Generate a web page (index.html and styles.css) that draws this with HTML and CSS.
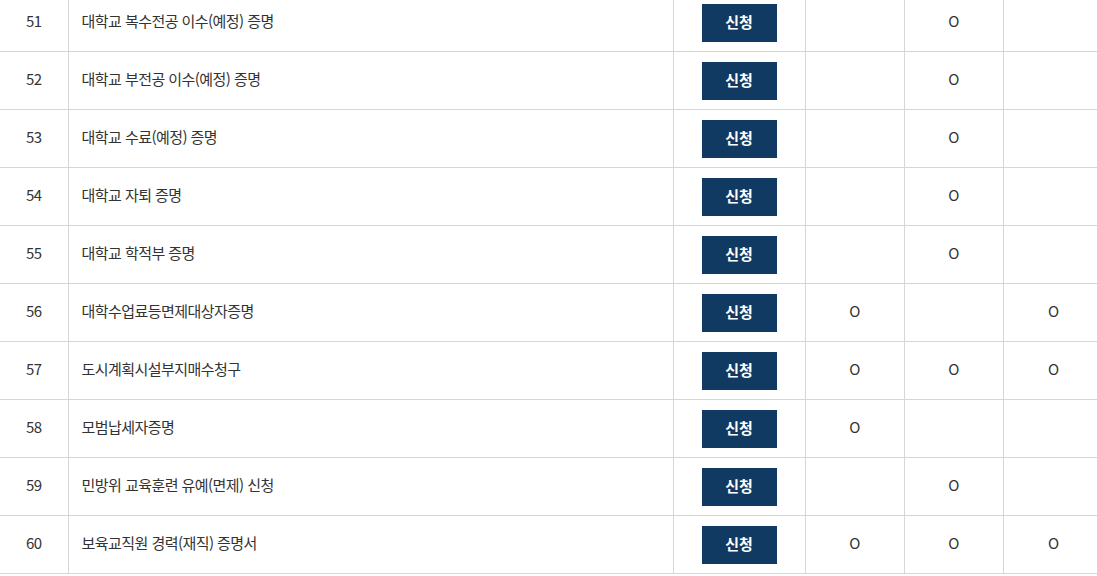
FILE: index.html
```html
<!DOCTYPE html>
<html lang="ko">
<head>
<meta charset="utf-8">
<link rel="stylesheet" href="styles.css">
</head>
<body>
<table class="doc-table">
  <colgroup>
    <col class="c-no"><col class="c-name"><col class="c-btn"><col class="c-o"><col class="c-o"><col class="c-last">
  </colgroup>
  <tbody>
    <tr><td class="no">51</td><td class="name">대학교 복수전공 이수(예정) 증명</td><td class="act"><button class="apply">신청</button></td><td class="mark"></td><td class="mark">O</td><td class="mark last"></td></tr>
    <tr><td class="no">52</td><td class="name">대학교 부전공 이수(예정) 증명</td><td class="act"><button class="apply">신청</button></td><td class="mark"></td><td class="mark">O</td><td class="mark last"></td></tr>
    <tr><td class="no">53</td><td class="name">대학교 수료(예정) 증명</td><td class="act"><button class="apply">신청</button></td><td class="mark"></td><td class="mark">O</td><td class="mark last"></td></tr>
    <tr><td class="no">54</td><td class="name">대학교 자퇴 증명</td><td class="act"><button class="apply">신청</button></td><td class="mark"></td><td class="mark">O</td><td class="mark last"></td></tr>
    <tr><td class="no">55</td><td class="name">대학교 학적부 증명</td><td class="act"><button class="apply">신청</button></td><td class="mark"></td><td class="mark">O</td><td class="mark last"></td></tr>
    <tr><td class="no">56</td><td class="name">대학수업료등면제대상자증명</td><td class="act"><button class="apply">신청</button></td><td class="mark">O</td><td class="mark"></td><td class="mark last">O</td></tr>
    <tr><td class="no">57</td><td class="name">도시계획시설부지매수청구</td><td class="act"><button class="apply">신청</button></td><td class="mark">O</td><td class="mark">O</td><td class="mark last">O</td></tr>
    <tr><td class="no">58</td><td class="name">모범납세자증명</td><td class="act"><button class="apply">신청</button></td><td class="mark">O</td><td class="mark"></td><td class="mark last"></td></tr>
    <tr><td class="no">59</td><td class="name">민방위 교육훈련 유예(면제) 신청</td><td class="act"><button class="apply">신청</button></td><td class="mark"></td><td class="mark">O</td><td class="mark last"></td></tr>
    <tr><td class="no">60</td><td class="name">보육교직원 경력(재직) 증명서</td><td class="act"><button class="apply">신청</button></td><td class="mark">O</td><td class="mark">O</td><td class="mark last">O</td></tr>
  </tbody>
</table>
</body>
</html>
```

FILE: styles.css
```css
html, body {
  margin: 0;
  padding: 0;
  background: #fff;
  overflow: hidden;
}
body {
  font-family: "Noto Sans CJK KR", "Noto Sans", sans-serif;
  color: #333;
}
.doc-table {
  width: 1103px;
  margin-top: -6px;
  border-collapse: collapse;
  table-layout: fixed;
}
.c-no { width: 68px; }
.c-name { width: 605px; }
.c-btn { width: 132px; }
.c-o { width: 99px; }
.c-last { width: 100px; }
.doc-table td {
  height: 54px;
  padding: 0 0 3px 0;
  border-bottom: 1px solid #d6d6d6;
  border-right: 1px solid #d6d6d6;
  font-size: 15px;
  line-height: 20px;
  vertical-align: middle;
  letter-spacing: -0.55px;
}
.doc-table td.act { padding: 0; }
.doc-table td.last { border-right: none; }
.no { text-align: center; }
.doc-table td.name { padding-left: 13px; text-align: left; }
.act { text-align: center; }
.mark { text-align: center; }
.apply {
  display: inline-block;
  width: 75px;
  height: 38px;
  border: none;
  background: #113a63;
  color: #fff;
  font-family: "Noto Sans CJK KR", sans-serif;
  font-size: 15px;
  font-weight: 700;
  padding: 0 0 2px 0;
  vertical-align: middle;
  cursor: pointer;
}
```
